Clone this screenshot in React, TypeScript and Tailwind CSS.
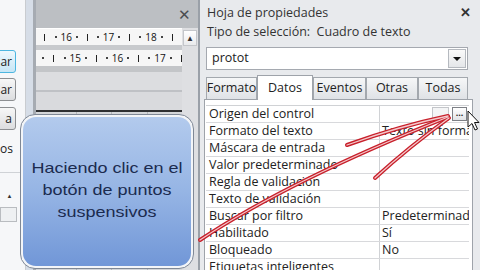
import React from 'react';

const rows: [string, string][] = [
  ['Origen del control', ''],
  ['Formato del texto', 'Texto sin formato'],
  ['Máscara de entrada', ''],
  ['Valor predeterminado', ''],
  ['Regla de validación', ''],
  ['Texto de validación', ''],
  ['Buscar por filtro', 'Predeterminado'],
  ['Habilitado', 'Sí'],
  ['Bloqueado', 'No'],
  ['Etiquetas inteligentes', ''],
];

const ruler1 = ['|', '·', '16', '·', '|', '·', '17', '·', '|', '·', '18', '·', '|', '·'];
const ruler2 = ['·', '|', '·', '15', '·', '|', '·', '16', '·', '|', '·', '17', '·', '|'];

function Mark({ m }: { m: string }) {
  if (m === '|')
    return (
      <span className="w-[10.6px] flex-none flex justify-center">
        <span className="w-px h-[7px] bg-[#222]" />
      </span>
    );
  if (m === '·')
    return (
      <span className="w-[10.6px] flex-none flex justify-center">
        <span className="w-[2px] h-[2px] bg-[#444]" />
      </span>
    );
  return (
    <span className="w-[10.6px] flex-none flex justify-center text-[10px] leading-none text-[#111]">{m}</span>
  );
}

function Ruler({ marks, className }: { marks: string[]; className: string }) {
  return (
    <div className={`h-[16px] bg-[#f6f6f6] flex items-center overflow-hidden ${className}`}>
      {marks.map((m, i) => (
        <Mark key={i} m={m} />
      ))}
    </div>
  );
}

function SideButton({ label, active }: { label: string; active?: boolean }) {
  return (
    <div
      className={`-ml-[30px] w-[46px] h-[23px] rounded-[3px] border flex items-center justify-end pr-[3px] text-[12px] text-[#222] ${
        active
          ? 'border-[#4db6e0] bg-gradient-to-b from-[#eef8fd] to-[#c6e6f6]'
          : 'border-[#8d8f92] bg-gradient-to-b from-[#f7f7f7] to-[#dcdddf]'
      }`}
    >
      {label}
    </div>
  );
}

function Tab({ label, w, active }: { label: string; w: string; active?: boolean }) {
  if (active)
    return (
      <div className={`${w} h-[25px] -mb-px relative z-10 bg-white border border-b-0 border-[#9ea3aa] flex items-center justify-center text-[12.5px] text-[#222]`}>
        {label}
      </div>
    );
  return (
    <div className={`${w} h-[22px] border border-b-0 border-[#a3a8ae] bg-gradient-to-b from-[#f6f7f8] to-[#dfe2e6] flex items-center justify-center text-[12.5px] text-[#222]`}>
      {label}
    </div>
  );
}

export default function App() {
  return (
    <div className="relative w-[480px] h-[270px] overflow-hidden flex bg-[#d3d5d8] font-['Open_Sans',sans-serif]">
      {/* left dialog strip */}
      <div className="w-[26px] flex-none bg-[#f6f7f9] border-r border-[#c9ccd0] flex flex-col overflow-hidden">
        <div className="h-[50px] flex-none" />
        <SideButton label="ar" active />
        <div className="h-[5px] flex-none" />
        <SideButton label="ar" />
        <div className="h-[6px] flex-none" />
        <SideButton label="a" />
        <div className="h-[8px] flex-none" />
        <div className="-ml-[30px] w-[46px] h-[22px] flex items-center justify-end pr-[3px] text-[12px] text-[#222]">os</div>
        <div className="h-[12px] flex-none" />
        <div className="h-px bg-[#cfd2d6]" />
        <div className="h-[20px] flex-none" />
        <div className="flex justify-center pr-[6px] text-[6px] leading-none text-[#333]">▲</div>
        <div className="h-[8px] flex-none" />
        <div className="w-[17px] h-[15px] border border-[#b9bcc0] bg-[#eef0f2]" />
      </div>

      {/* window frame */}
      <div className="w-[10px] flex-none bg-[#d6dde7] border-r-[3px] border-[#a6abb2]" />

      {/* design surface */}
      <div className="w-[162px] flex-none flex flex-col">
        <div className="h-[28px] flex-none bg-[#bcbfc3] flex items-center justify-end pr-[7px] text-[15px] text-[#4a4d52]">✕</div>
        <div className="flex-1 flex">
          <div className="w-[146px] flex-none flex flex-col">
            <div className="h-px bg-white" />
            <Ruler marks={ruler1} className="pl-[3.7px]" />
            <div className="h-[5px] bg-[#c8cacd]" />
            <Ruler marks={ruler2} className="pl-[2.1px]" />
            <div className="h-[6px] bg-[#c3c5c8]" />
            <div className="h-[18px] bg-[#dcdde0]" />
            <div className="h-[2px] bg-[#bfc1c5]" />
            <div className="h-[18px] bg-[#d9dadd]" />
            <div className="h-[2px] bg-[#2e2f31]" />
            <div className="flex-1 flex pl-[40px] bg-[#d4d6d9]">
              <div className="w-[43px] border-l border-[#b3b6ba]" />
              <div className="w-[43px] border-l border-[#b3b6ba]" />
              <div className="w-[43px] border-l border-[#b3b6ba]" />
            </div>
          </div>
          <div className="w-[16px] flex-none bg-[#dedfe2] flex flex-col">
            <div className="h-[2px]" />
            <div className="h-[16px] mx-[1px] bg-gradient-to-b from-white to-[#e9eaec] border border-[#c4c6ca] flex items-center justify-center text-[8px] leading-none text-[#333]">▲</div>
          </div>
        </div>
      </div>

      {/* property sheet */}
      <div className="flex-1 bg-[#e8eaed] border-l-2 border-[#9aa0a8] flex flex-col text-[#222]">
        <div className="h-[26px] flex-none flex items-center justify-between pl-[7px] pr-[9px]">
          <span className="text-[12.5px] text-[#333]">Hoja de propiedades</span>
          <span className="text-[13px] font-bold text-[#333]">✕</span>
        </div>
        <div className="h-[12px] flex items-center pl-[7px] text-[12.5px] text-[#333] whitespace-pre">
          {'Tipo de selección:  Cuadro de texto'}
        </div>
        <div className="ml-[6px] mt-[9px] w-[262px] h-[23px] flex-none border border-[#a5a9b0] bg-white flex items-center justify-between pl-[5px] pr-[1px]">
          <span className="text-[12.5px]">protot</span>
          <div className="w-[18px] h-[19px] border border-[#b5b9bf] bg-gradient-to-b from-[#fafafa] to-[#e4e6e9] flex items-center justify-center">
            <div className="w-0 h-0 border-l-[4px] border-r-[4px] border-t-[4px] border-l-transparent border-r-transparent border-t-[#111]" />
          </div>
        </div>
        <div className="ml-[6px] mt-[5px] h-[25px] flex items-end">
          <Tab label="Formato" w="w-[51px]" />
          <Tab label="Datos" w="w-[56px]" active />
          <Tab label="Eventos" w="w-[53px]" />
          <Tab label="Otras" w="w-[52px]" />
          <Tab label="Todas" w="w-[50px]" />
        </div>
        <div className="ml-[4px] w-[269px] flex-1 bg-white border border-[#9ea3aa] pt-[5px] pl-[1px]">
          <div className="w-[263px] border-t border-[#d0d2d5]">
            {rows.map(([label, value], i) => (
              <div key={label} className="h-[17px] flex border-b border-[#d8d9dc] text-[12.5px] leading-none">
                <div className="w-[174px] flex-none border-r border-[#d0d2d5] pl-[3px] flex items-center whitespace-nowrap">
                  {label}
                </div>
                {i === 0 ? (
                  <div className="flex-1 flex items-center justify-end gap-[3px] pr-[2px]">
                    <div className="w-[17px] h-[14px] border border-[#c3c5c9] bg-[#f4f5f6]" />
                    <div className="w-[15px] h-[14px] border border-[#7d8086] bg-gradient-to-b from-white to-[#e2e4e7] flex items-end justify-center pb-[3px] text-[9px] font-bold leading-none">
                      ...
                    </div>
                  </div>
                ) : (
                  <div className="flex-1 pl-[2px] flex items-center whitespace-nowrap overflow-hidden">{value}</div>
                )}
              </div>
            ))}
          </div>
        </div>
      </div>

      {/* callout */}
      <div className="absolute left-[20px] top-[114px] w-[174px] h-[155px] rounded-[15px] border border-[#7f8896] p-[2px] bg-[#f3f5f8]">
        <div className="w-full h-full rounded-[13px] bg-gradient-to-b from-[#aec7ecee] via-[#8fb0e3ee] to-[#6890d5ee] flex items-center justify-center">
          <div className="scale-x-[1.2] text-center text-[15px] leading-[22px] text-[#1b2b4f] font-['Liberation_Sans',Arial,sans-serif] -mt-[3px]">
            Haciendo clic en el
            <br />
            botón de puntos
            <br />
            suspensivos
          </div>
        </div>
      </div>

      {/* hand drawn arrows */}
      <svg className="absolute inset-0 pointer-events-none" width="480" height="270" viewBox="0 0 480 270">
        <g fill="none" strokeLinecap="round">
          <path d="M200 240 Q290 180 448 117" stroke="#c8202b" strokeWidth="4" />
          <path d="M347 145 Q400 126 448 116" stroke="#c8202b" strokeWidth="4" />
          <path d="M375 178 Q410 146 449 118" stroke="#c8202b" strokeWidth="4" />
          <path d="M200 240 Q290 180 448 117" stroke="#f4c9cc" strokeWidth="1.3" />
          <path d="M347 145 Q400 126 448 116" stroke="#f4c9cc" strokeWidth="1.3" />
          <path d="M375 178 Q410 146 449 118" stroke="#f4c9cc" strokeWidth="1.3" />
        </g>
      </svg>

      {/* mouse pointer */}
      <svg className="absolute left-[467px] top-[110px] pointer-events-none" width="13" height="21" viewBox="0 0 13 21">
        <path d="M1 1 L1 17 L5 13.5 L8 20 L10.5 19 L7.5 12.5 L12 12.5 Z" fill="#fff" stroke="#111" strokeWidth="1" strokeLinejoin="round" />
      </svg>
    </div>
  );
}
